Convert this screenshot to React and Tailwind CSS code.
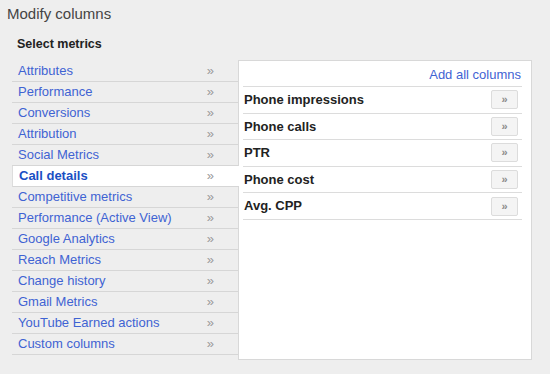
const groups = [
  'Attributes',
  'Performance',
  'Conversions',
  'Attribution',
  'Social Metrics',
  'Call details',
  'Competitive metrics',
  'Performance (Active View)',
  'Google Analytics',
  'Reach Metrics',
  'Change history',
  'Gmail Metrics',
  'YouTube Earned actions',
  'Custom columns',
];

const columns = ['Phone impressions', 'Phone calls', 'PTR', 'Phone cost', 'Avg. CPP'];

export default function App() {
  const active = 'Call details';

  return (
    <div className="h-[374px] w-[550px] bg-[#eeeeee] font-['Liberation_Sans',Arial,sans-serif] overflow-hidden">
      <div className="pl-[7px] pt-[5px] text-[15px] leading-[18px] text-[#444]">Modify columns</div>
      <div className="pl-[17px] pt-[14px] text-[12.5px] leading-[15px] font-bold text-[#222]">Select metrics</div>

      <div className="mt-[8px] ml-[12px] flex">
        {/* metric groups */}
        <div className="w-[226px] pt-[1px]">
          {groups.map((g) => {
            const on = g === active;
            return (
              <div
                key={g}
                className={`relative flex h-[21px] items-center justify-between border-b border-[#d6d6d6] text-[13px] ${
                  on
                    ? 'z-10 mr-[-1px] bg-white pl-[6px] pr-[25px] font-bold text-[#1a4fc4] border-l border-l-[#dddddd]'
                    : 'pl-[6px] pr-[24px] text-[#3f63d3]'
                }`}
              >
                <span>{g}</span>
                <span className="text-[13px] font-normal text-[#9a9a9a]">»</span>
              </div>
            );
          })}
        </div>

        {/* available columns */}
        <div className="h-[300px] w-[294px] border border-[#d8d8d8] bg-white pl-[4px] pr-[9px]">
          <div className="flex justify-end border-b border-[#dcdcdc] pt-[6px] pb-[4px] pr-[1px] text-[13px] leading-[15px] text-[#3f63d3]">
            Add all columns
          </div>
          {columns.map((c) => (
            <div
              key={c}
              className="flex h-[26.6px] items-center justify-between border-b border-[#dcdcdc] pl-[1px] pr-[4px]"
            >
              <span className="text-[13px] font-bold text-[#222]">{c}</span>
              <button className="flex h-[19px] w-[27px] items-center justify-center rounded-[2px] border border-[#dcdcdc] bg-[#f4f4f4] text-[11px] font-bold leading-none text-[#8a8a8a]">
                »
              </button>
            </div>
          ))}
        </div>
      </div>
    </div>
  );
}
